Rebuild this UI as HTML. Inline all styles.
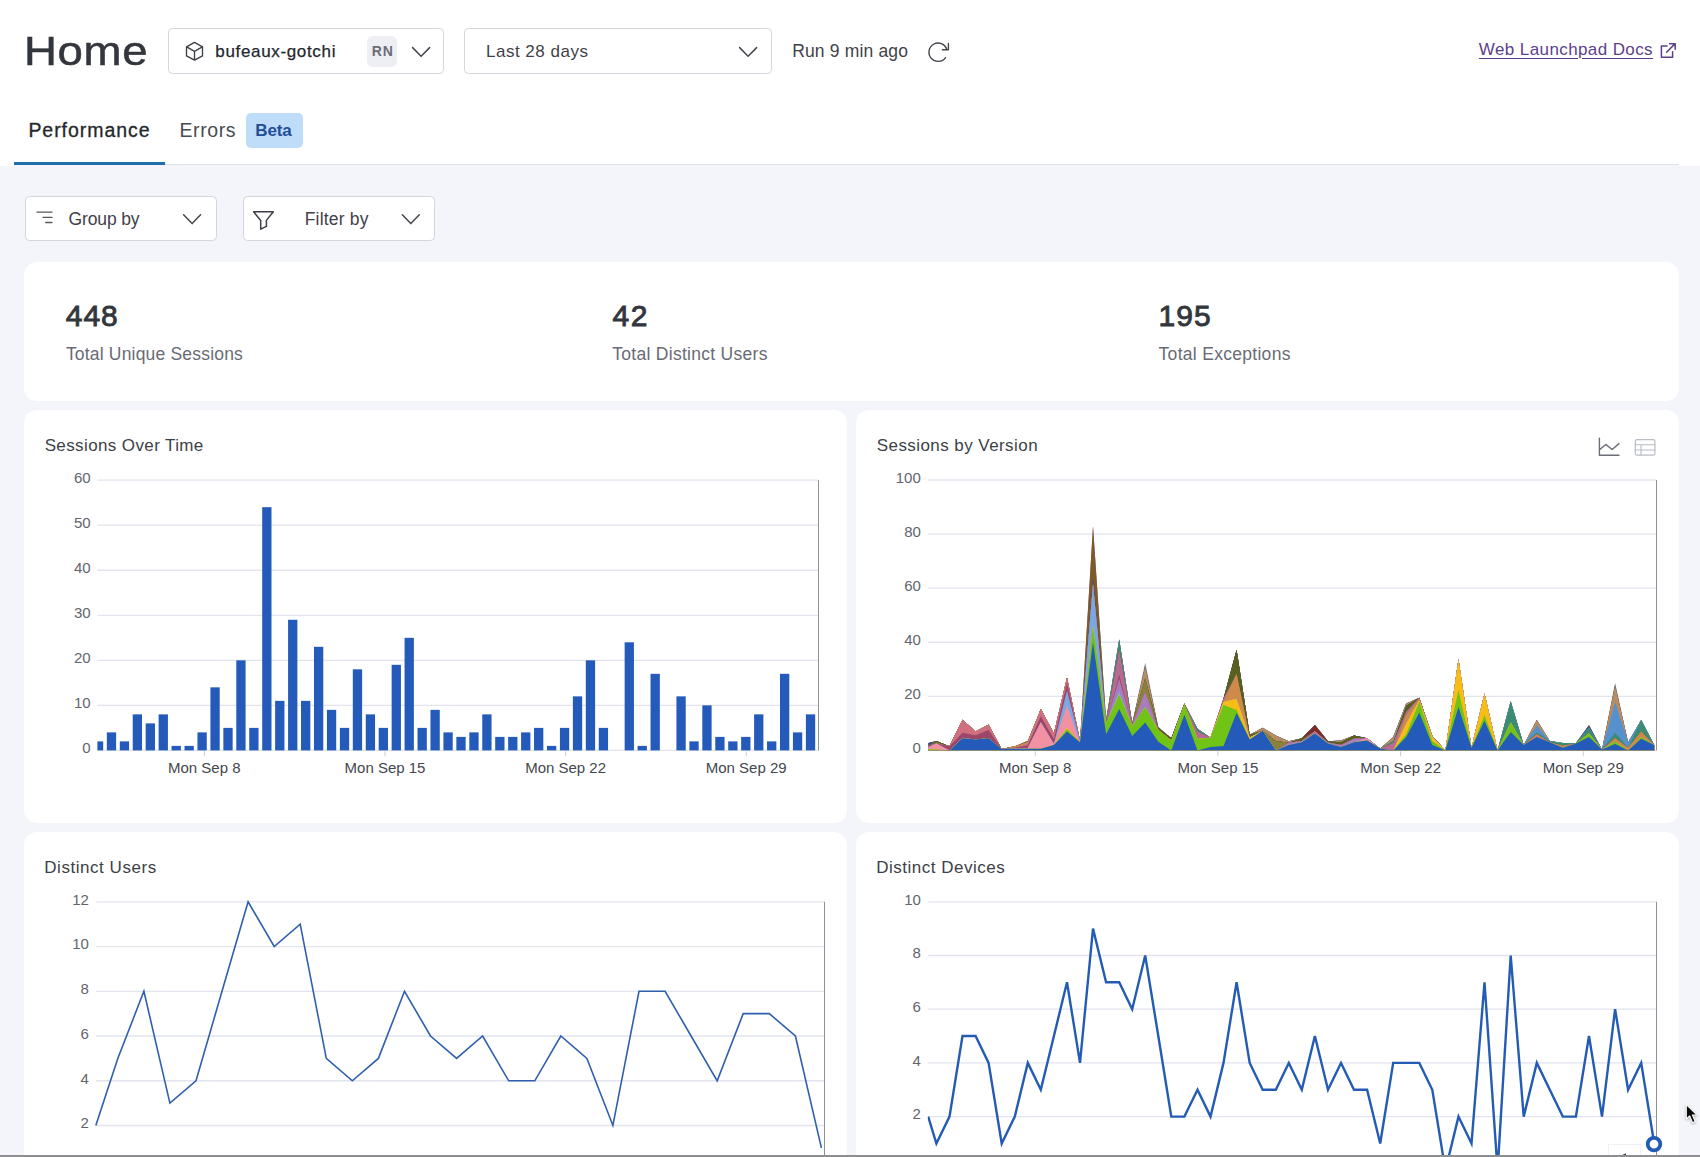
<!DOCTYPE html>
<html lang="en"><head><meta charset="utf-8"><title>Home</title>
<style>
html,body{margin:0;padding:0;}
body{width:1700px;height:1157px;overflow:hidden;position:relative;background:#f4f5fa;font-family:"Liberation Sans", sans-serif;}
.t{position:absolute;white-space:nowrap;line-height:1;}
.abs{position:absolute;}
.hdr{left:0;top:0;width:1700px;height:164px;background:#fff;}
.card{background:#fff;border-radius:13px;}
.sel{background:#fff;border:1.5px solid #d5d6dd;border-radius:4.5px;box-sizing:border-box;}
svg{position:absolute;left:0;top:0;overflow:visible;}
</style></head><body>

<div id="nontext" style="display:contents">
<div class="abs hdr"></div>
<div class="abs" style="left:0;top:164px;width:14px;height:2px;background:#fff;"></div>
<div class="abs" style="left:1679px;top:164px;width:21px;height:2px;background:#fff;"></div>
<div class="abs" style="left:14px;top:163.5px;width:1665px;height:1.3px;background:#dfe1e8;"></div>
<div class="abs" style="left:14px;top:162.2px;width:151px;height:3px;background:#1f6fae;"></div>
<div class="abs sel" style="left:168.3px;top:28.3px;width:275.6px;height:45.7px;"></div>
<div class="abs sel" style="left:464.3px;top:28.3px;width:308px;height:45.7px;"></div>
<div class="abs" style="left:366.8px;top:36px;width:30.6px;height:30.5px;background:#eeeff4;border-radius:6px;"></div>
<div class="abs" style="left:246px;top:112.6px;width:57.2px;height:35.2px;background:#bfdcf8;border-radius:5px;"></div>
<div class="abs sel" style="left:24.6px;top:196.3px;width:192px;height:45px;"></div>
<div class="abs sel" style="left:242.6px;top:196.3px;width:192.6px;height:45px;"></div>
<div class="abs card" style="left:24px;top:262px;width:1655px;height:139px;"></div>
<div class="abs card" style="left:24px;top:410px;width:823px;height:413px;"></div>
<div class="abs card" style="left:856px;top:410px;width:823px;height:413px;"></div>
<div class="abs card" style="left:24px;top:832px;width:823px;height:412px;"></div>
<div class="abs card" style="left:856px;top:832px;width:823px;height:412px;"></div>
<svg width="1700" height="1157" viewBox="0 0 1700 1157">
<g fill="none" stroke-linecap="round" stroke-linejoin="round">
<!-- cube -->
<path d="M194.5 42.4 L202.5 46.8 L202.5 55.8 L194.5 60.1 L186.5 55.8 L186.5 46.8 Z M186.7 46.9 L194.5 51.3 L202.3 46.9 M194.5 51.3 L194.5 60" stroke="#3c3f46" stroke-width="1.35"/>
<!-- chevrons -->
<path d="M412.6 47.6 L421.1 56.2 L429.6 47.6" stroke="#44474e" stroke-width="1.5"/>
<path d="M739.6 47.6 L748.1 56.2 L756.6 47.6" stroke="#44474e" stroke-width="1.5"/>
<path d="M183.6 214.8 L192.1 223.6 L200.6 214.8" stroke="#44474e" stroke-width="1.5"/>
<path d="M402.3 214.8 L410.8 223.6 L419.3 214.8" stroke="#44474e" stroke-width="1.5"/>
<!-- refresh -->
<path d="M945.6 57.6 A9.2 9.2 0 1 1 946.9 49.4" stroke="#44474e" stroke-width="1.4"/>
<path d="M948.4 43.4 L948.4 49.7 L942.4 49.7" stroke="#44474e" stroke-width="1.4"/>
<!-- external link -->
<path d="M1667 46.1 L1661.4 46.1 L1661.4 57.3 L1672.6 57.3 L1672.6 51.8" stroke="#5b3f8c" stroke-width="1.5"/>
<path d="M1666.6 52.2 L1674.9 43.9 M1669.6 43.7 L1675.2 43.7 L1675.2 49.3" stroke="#5b3f8c" stroke-width="1.5"/>
<!-- group by -->
<path d="M37 212.2 L52 212.2 M43.1 217.4 L52 217.4 M45.7 222.5 L52 222.5" stroke="#55585f" stroke-width="1.3"/>
<!-- funnel -->
<path d="M253.6 211.8 L273.3 211.8 L266.4 220.4 L266.4 226.3 L260.7 229.2 L260.7 220.4 Z" stroke="#3c3f46" stroke-width="1.5"/>
<!-- line chart icon -->
<path d="M1599.4 438.2 L1599.4 455.2 L1619 455.2 M1599.6 449.8 L1605.7 444.4 L1612.2 449.5 L1618.9 443.6" stroke="#6c6f77" stroke-width="1.4"/>
<!-- table icon -->
<rect x="1635.3" y="439.7" width="19.6" height="15.4" rx="1.8" stroke="#b9bcc5" stroke-width="1.2"/>
<path d="M1635.3 444.7 L1654.9 444.7 M1635.3 450 L1654.9 450 M1641 444.7 L1641 455.1" stroke="#b9bcc5" stroke-width="1.1"/>
</g>
<!-- mouse cursor -->
<path d="M1686.3 1104.6 L1686.3 1119 L1689.7 1115.9 L1692.6 1122.7 L1695.2 1121.5 L1692.4 1115 L1696.9 1114.8 Z" fill="#0a0a0a" stroke="#fff" stroke-width="1.1" stroke-linejoin="round" style="filter:drop-shadow(0.5px 1px 1px rgba(0,0,0,0.3))"/>

<line x1="97.4" y1="750.40" x2="818.4" y2="750.40" stroke="#e2e4ee" stroke-width="1.3"/>
<line x1="97.4" y1="705.36" x2="818.4" y2="705.36" stroke="#e2e4ee" stroke-width="1.3"/>
<line x1="97.4" y1="660.32" x2="818.4" y2="660.32" stroke="#e2e4ee" stroke-width="1.3"/>
<line x1="97.4" y1="615.28" x2="818.4" y2="615.28" stroke="#e2e4ee" stroke-width="1.3"/>
<line x1="97.4" y1="570.24" x2="818.4" y2="570.24" stroke="#e2e4ee" stroke-width="1.3"/>
<line x1="97.4" y1="525.20" x2="818.4" y2="525.20" stroke="#e2e4ee" stroke-width="1.3"/>
<line x1="97.4" y1="480.16" x2="818.4" y2="480.16" stroke="#e2e4ee" stroke-width="1.3"/>
<clipPath id="cp1"><rect x="97.4" y="470" width="721.0" height="290"/></clipPath>
<g clip-path="url(#cp1)" fill="#245bba"><rect x="93.90" y="741.39" width="9.3" height="9.01"/><rect x="106.84" y="732.38" width="9.3" height="18.02"/><rect x="119.79" y="741.39" width="9.3" height="9.01"/><rect x="132.73" y="714.37" width="9.3" height="36.03"/><rect x="145.68" y="723.38" width="9.3" height="27.02"/><rect x="158.62" y="714.37" width="9.3" height="36.03"/><rect x="171.57" y="745.90" width="9.3" height="4.50"/><rect x="184.52" y="745.90" width="9.3" height="4.50"/><rect x="197.46" y="732.38" width="9.3" height="18.02"/><rect x="210.41" y="687.34" width="9.3" height="63.06"/><rect x="223.35" y="727.88" width="9.3" height="22.52"/><rect x="236.29" y="660.32" width="9.3" height="90.08"/><rect x="249.24" y="727.88" width="9.3" height="22.52"/><rect x="262.19" y="507.18" width="9.3" height="243.22"/><rect x="275.13" y="700.86" width="9.3" height="49.54"/><rect x="288.08" y="619.78" width="9.3" height="130.62"/><rect x="301.02" y="700.86" width="9.3" height="49.54"/><rect x="313.97" y="646.81" width="9.3" height="103.59"/><rect x="326.91" y="709.86" width="9.3" height="40.54"/><rect x="339.86" y="727.88" width="9.3" height="22.52"/><rect x="352.80" y="669.33" width="9.3" height="81.07"/><rect x="365.75" y="714.37" width="9.3" height="36.03"/><rect x="378.69" y="727.88" width="9.3" height="22.52"/><rect x="391.64" y="664.82" width="9.3" height="85.58"/><rect x="404.58" y="637.80" width="9.3" height="112.60"/><rect x="417.53" y="727.88" width="9.3" height="22.52"/><rect x="430.47" y="709.86" width="9.3" height="40.54"/><rect x="443.42" y="732.38" width="9.3" height="18.02"/><rect x="456.36" y="736.89" width="9.3" height="13.51"/><rect x="469.31" y="732.38" width="9.3" height="18.02"/><rect x="482.25" y="714.37" width="9.3" height="36.03"/><rect x="495.20" y="736.89" width="9.3" height="13.51"/><rect x="508.14" y="736.89" width="9.3" height="13.51"/><rect x="521.09" y="732.38" width="9.3" height="18.02"/><rect x="534.03" y="727.88" width="9.3" height="22.52"/><rect x="546.98" y="745.90" width="9.3" height="4.50"/><rect x="559.92" y="727.88" width="9.3" height="22.52"/><rect x="572.87" y="696.35" width="9.3" height="54.05"/><rect x="585.81" y="660.32" width="9.3" height="90.08"/><rect x="598.75" y="727.88" width="9.3" height="22.52"/><rect x="624.64" y="642.30" width="9.3" height="108.10"/><rect x="637.59" y="745.90" width="9.3" height="4.50"/><rect x="650.53" y="673.83" width="9.3" height="76.57"/><rect x="676.42" y="696.35" width="9.3" height="54.05"/><rect x="689.37" y="741.39" width="9.3" height="9.01"/><rect x="702.31" y="705.36" width="9.3" height="45.04"/><rect x="715.26" y="736.89" width="9.3" height="13.51"/><rect x="728.21" y="741.39" width="9.3" height="9.01"/><rect x="741.15" y="736.89" width="9.3" height="13.51"/><rect x="754.10" y="714.37" width="9.3" height="36.03"/><rect x="767.04" y="741.39" width="9.3" height="9.01"/><rect x="779.99" y="673.83" width="9.3" height="76.57"/><rect x="792.93" y="732.38" width="9.3" height="18.02"/><rect x="805.88" y="714.37" width="9.3" height="36.03"/><rect x="818.82" y="741.39" width="9.3" height="9.01"/></g>
<line x1="818.5" y1="480.16" x2="818.5" y2="750.40" stroke="#8f9199" stroke-width="1"/>
<line x1="204.30" y1="751.3" x2="204.30" y2="756.3" stroke="#c9ccd6" stroke-width="1"/>
<line x1="385.00" y1="751.3" x2="385.00" y2="756.3" stroke="#c9ccd6" stroke-width="1"/>
<line x1="565.60" y1="751.3" x2="565.60" y2="756.3" stroke="#c9ccd6" stroke-width="1"/>
<line x1="746.20" y1="751.3" x2="746.20" y2="756.3" stroke="#c9ccd6" stroke-width="1"/>
<line x1="928.2" y1="750.40" x2="1656.3" y2="750.40" stroke="#e2e4ee" stroke-width="1.3"/>
<line x1="928.2" y1="696.32" x2="1656.3" y2="696.32" stroke="#e2e4ee" stroke-width="1.3"/>
<line x1="928.2" y1="642.24" x2="1656.3" y2="642.24" stroke="#e2e4ee" stroke-width="1.3"/>
<line x1="928.2" y1="588.16" x2="1656.3" y2="588.16" stroke="#e2e4ee" stroke-width="1.3"/>
<line x1="928.2" y1="534.08" x2="1656.3" y2="534.08" stroke="#e2e4ee" stroke-width="1.3"/>
<line x1="928.2" y1="480.00" x2="1656.3" y2="480.00" stroke="#e2e4ee" stroke-width="1.3"/>
<clipPath id="cp2"><rect x="928.2" y="470" width="727.5999999999999" height="280.29999999999995"/></clipPath>
<g clip-path="url(#cp2)"><polygon fill="#7d7f93" points="928.2,743.1 936.4,740.9 949.5,746.3 962.5,719.8 975.6,731.5 988.6,724.7 1001.7,749.0 1014.8,746.3 1027.8,740.7 1040.8,709.0 1053.9,733.6 1067.0,677.4 1080.0,740.7 1093.0,526.0 1106.1,719.3 1119.2,639.5 1132.2,723.4 1145.2,662.8 1158.3,726.9 1171.3,738.2 1184.4,703.4 1197.5,728.8 1210.5,737.7 1223.5,698.8 1236.6,649.8 1249.7,734.7 1262.7,727.7 1275.8,735.5 1288.8,741.2 1301.8,738.2 1314.9,725.0 1328.0,741.2 1341.0,740.4 1354.0,735.5 1367.1,738.2 1380.2,748.5 1393.2,736.9 1406.2,703.6 1419.3,697.7 1432.3,736.1 1445.4,750.4 1458.5,659.3 1471.5,747.7 1484.5,693.6 1497.6,750.4 1510.7,701.2 1523.7,745.0 1536.8,720.1 1549.8,740.9 1562.8,743.1 1575.9,743.1 1589.0,725.3 1602.0,749.6 1615.1,682.8 1628.1,742.3 1641.2,720.1 1654.2,745.0 1654.2,751.4 928.2,751.4"/><polygon fill="#80592a" points="928.2,743.1 936.4,740.9 949.5,746.3 962.5,719.8 975.6,731.5 988.6,724.7 1001.7,749.0 1014.8,746.3 1027.8,740.7 1040.8,709.0 1053.9,733.6 1067.0,677.4 1080.0,740.7 1093.0,526.0 1106.1,719.3 1119.2,639.5 1132.2,723.4 1145.2,666.6 1158.3,726.9 1171.3,738.2 1184.4,703.4 1197.5,728.8 1210.5,737.7 1223.5,698.8 1236.6,649.8 1249.7,734.7 1262.7,727.7 1275.8,735.5 1288.8,741.2 1301.8,738.2 1314.9,725.0 1328.0,741.2 1341.0,740.4 1354.0,735.5 1367.1,738.2 1380.2,748.5 1393.2,736.9 1406.2,703.6 1419.3,697.7 1432.3,736.1 1445.4,750.4 1458.5,659.3 1471.5,747.7 1484.5,693.6 1497.6,750.4 1510.7,701.2 1523.7,745.0 1536.8,720.1 1549.8,740.9 1562.8,743.1 1575.9,743.1 1589.0,725.3 1602.0,749.6 1615.1,685.5 1628.1,742.3 1641.2,720.1 1654.2,745.0 1654.2,751.4 928.2,751.4"/><polygon fill="#3a4a8c" points="928.2,743.1 936.4,740.9 949.5,746.3 962.5,719.8 975.6,731.5 988.6,724.7 1001.7,749.0 1014.8,746.3 1027.8,742.0 1040.8,709.0 1053.9,733.6 1067.0,677.4 1080.0,740.7 1093.0,577.3 1106.1,721.2 1119.2,639.5 1132.2,723.4 1145.2,666.6 1158.3,728.0 1171.3,738.2 1184.4,703.4 1197.5,728.8 1210.5,737.7 1223.5,698.8 1236.6,649.8 1249.7,734.7 1262.7,727.7 1275.8,735.5 1288.8,741.2 1301.8,738.2 1314.9,725.0 1328.0,741.2 1341.0,740.4 1354.0,735.5 1367.1,738.2 1380.2,748.5 1393.2,736.9 1406.2,703.6 1419.3,697.7 1432.3,736.1 1445.4,750.4 1458.5,659.3 1471.5,747.7 1484.5,693.6 1497.6,750.4 1510.7,701.2 1523.7,745.0 1536.8,720.1 1549.8,740.9 1562.8,743.1 1575.9,743.1 1589.0,725.3 1602.0,749.6 1615.1,685.5 1628.1,742.3 1641.2,720.1 1654.2,745.0 1654.2,751.4 928.2,751.4"/><polygon fill="#b98d62" points="928.2,745.8 936.4,740.9 949.5,746.3 962.5,719.8 975.6,731.5 988.6,724.7 1001.7,749.0 1014.8,746.3 1027.8,742.0 1040.8,709.0 1053.9,733.6 1067.0,677.4 1080.0,740.7 1093.0,584.1 1106.1,721.2 1119.2,639.5 1132.2,723.4 1145.2,666.6 1158.3,728.0 1171.3,738.2 1184.4,703.4 1197.5,728.8 1210.5,737.7 1223.5,698.8 1236.6,649.8 1249.7,734.7 1262.7,727.7 1275.8,735.5 1288.8,741.2 1301.8,738.2 1314.9,725.0 1328.0,741.2 1341.0,740.4 1354.0,735.5 1367.1,738.2 1380.2,748.5 1393.2,736.9 1406.2,703.6 1419.3,697.7 1432.3,736.1 1445.4,750.4 1458.5,659.3 1471.5,747.7 1484.5,693.6 1497.6,750.4 1510.7,701.2 1523.7,745.0 1536.8,720.1 1549.8,740.9 1562.8,743.1 1575.9,743.1 1589.0,727.4 1602.0,749.6 1615.1,685.5 1628.1,742.3 1641.2,720.1 1654.2,745.0 1654.2,751.4 928.2,751.4"/><polygon fill="#5690cd" points="928.2,745.8 936.4,740.9 949.5,746.3 962.5,719.8 975.6,731.5 988.6,724.7 1001.7,749.0 1014.8,746.3 1027.8,742.0 1040.8,709.0 1053.9,733.6 1067.0,677.4 1080.0,740.7 1093.0,584.1 1106.1,721.2 1119.2,639.5 1132.2,723.4 1145.2,678.5 1158.3,728.0 1171.3,738.2 1184.4,703.4 1197.5,728.8 1210.5,737.7 1223.5,698.8 1236.6,649.8 1249.7,734.7 1262.7,730.7 1275.8,740.9 1288.8,742.8 1301.8,738.2 1314.9,725.0 1328.0,741.2 1341.0,742.3 1354.0,735.5 1367.1,738.2 1380.2,748.5 1393.2,740.9 1406.2,705.8 1419.3,697.7 1432.3,736.1 1445.4,750.4 1458.5,659.3 1471.5,747.7 1484.5,693.6 1497.6,750.4 1510.7,701.2 1523.7,745.0 1536.8,725.5 1549.8,740.9 1562.8,743.1 1575.9,743.1 1589.0,727.4 1602.0,749.6 1615.1,702.0 1628.1,742.3 1641.2,720.1 1654.2,745.0 1654.2,751.4 928.2,751.4"/><polygon fill="#3b8c74" points="928.2,745.8 936.4,740.9 949.5,746.3 962.5,719.8 975.6,731.5 988.6,724.7 1001.7,749.0 1014.8,746.3 1027.8,742.0 1040.8,709.0 1053.9,733.6 1067.0,677.4 1080.0,740.7 1093.0,584.1 1106.1,721.2 1119.2,639.5 1132.2,723.4 1145.2,678.5 1158.3,728.0 1171.3,738.2 1184.4,703.4 1197.5,728.8 1210.5,737.7 1223.5,698.8 1236.6,649.8 1249.7,734.7 1262.7,730.7 1275.8,740.9 1288.8,742.8 1301.8,738.2 1314.9,725.0 1328.0,741.2 1341.0,742.3 1354.0,735.5 1367.1,738.2 1380.2,748.5 1393.2,740.9 1406.2,705.8 1419.3,697.7 1432.3,736.1 1445.4,750.4 1458.5,659.3 1471.5,747.7 1484.5,693.6 1497.6,750.4 1510.7,701.2 1523.7,745.0 1536.8,732.3 1549.8,740.9 1562.8,743.1 1575.9,743.1 1589.0,727.4 1602.0,749.6 1615.1,732.8 1628.1,747.7 1641.2,720.1 1654.2,745.0 1654.2,751.4 928.2,751.4"/><polygon fill="#7c2a2c" points="928.2,745.8 936.4,740.9 949.5,746.3 962.5,719.8 975.6,731.5 988.6,724.7 1001.7,749.0 1014.8,746.3 1027.8,742.0 1040.8,709.0 1053.9,733.6 1067.0,677.4 1080.0,740.7 1093.0,584.1 1106.1,723.4 1119.2,649.8 1132.2,723.4 1145.2,678.5 1158.3,728.0 1171.3,738.2 1184.4,703.4 1197.5,731.5 1210.5,737.7 1223.5,698.8 1236.6,649.8 1249.7,734.7 1262.7,730.7 1275.8,740.9 1288.8,742.8 1301.8,738.2 1314.9,725.0 1328.0,741.2 1341.0,742.3 1354.0,735.5 1367.1,738.2 1380.2,748.5 1393.2,743.1 1406.2,705.8 1419.3,697.7 1432.3,736.1 1445.4,750.4 1458.5,659.3 1471.5,747.7 1484.5,693.6 1497.6,750.4 1510.7,722.5 1523.7,745.0 1536.8,734.2 1549.8,742.3 1562.8,745.8 1575.9,743.6 1589.0,733.4 1602.0,749.6 1615.1,738.2 1628.1,747.7 1641.2,731.5 1654.2,745.0 1654.2,751.4 928.2,751.4"/><polygon fill="#57601f" points="928.2,745.8 936.4,740.9 949.5,746.3 962.5,719.8 975.6,731.5 988.6,724.7 1001.7,749.0 1014.8,746.3 1027.8,742.0 1040.8,709.0 1053.9,733.6 1067.0,677.4 1080.0,740.7 1093.0,584.1 1106.1,723.4 1119.2,649.8 1132.2,723.4 1145.2,678.5 1158.3,728.0 1171.3,738.2 1184.4,703.4 1197.5,731.5 1210.5,737.7 1223.5,698.8 1236.6,649.8 1249.7,734.7 1262.7,730.7 1275.8,740.9 1288.8,742.8 1301.8,738.2 1314.9,731.2 1328.0,741.2 1341.0,742.3 1354.0,735.5 1367.1,738.2 1380.2,748.5 1393.2,743.1 1406.2,705.8 1419.3,697.7 1432.3,736.1 1445.4,750.4 1458.5,659.3 1471.5,747.7 1484.5,693.6 1497.6,750.4 1510.7,722.5 1523.7,745.0 1536.8,734.2 1549.8,742.3 1562.8,745.8 1575.9,743.6 1589.0,733.4 1602.0,749.6 1615.1,738.2 1628.1,747.7 1641.2,731.5 1654.2,745.0 1654.2,751.4 928.2,751.4"/><polygon fill="#8a8238" points="928.2,745.8 936.4,742.3 949.5,746.3 962.5,719.8 975.6,731.5 988.6,724.7 1001.7,749.0 1014.8,746.3 1027.8,742.0 1040.8,709.0 1053.9,733.6 1067.0,677.4 1080.0,740.7 1093.0,584.1 1106.1,723.4 1119.2,649.8 1132.2,723.4 1145.2,678.5 1158.3,730.1 1171.3,740.4 1184.4,703.4 1197.5,731.5 1210.5,737.7 1223.5,698.8 1236.6,673.9 1249.7,737.4 1262.7,730.7 1275.8,740.9 1288.8,742.8 1301.8,740.9 1314.9,731.2 1328.0,742.6 1341.0,745.0 1354.0,738.8 1367.1,738.2 1380.2,748.5 1393.2,743.1 1406.2,712.0 1419.3,697.7 1432.3,736.1 1445.4,750.4 1458.5,659.3 1471.5,747.7 1484.5,693.6 1497.6,750.4 1510.7,722.5 1523.7,745.0 1536.8,734.2 1549.8,742.3 1562.8,745.8 1575.9,743.6 1589.0,733.4 1602.0,749.6 1615.1,738.2 1628.1,747.7 1641.2,731.5 1654.2,745.0 1654.2,751.4 928.2,751.4"/><polygon fill="#b86a96" points="928.2,745.8 936.4,743.4 949.5,746.3 962.5,719.8 975.6,731.5 988.6,724.7 1001.7,749.0 1014.8,746.3 1027.8,742.0 1040.8,709.0 1053.9,733.6 1067.0,677.4 1080.0,740.7 1093.0,584.1 1106.1,723.4 1119.2,649.8 1132.2,724.7 1145.2,692.0 1158.3,730.1 1171.3,740.4 1184.4,704.4 1197.5,731.5 1210.5,737.7 1223.5,698.8 1236.6,673.9 1249.7,737.4 1262.7,730.7 1275.8,750.4 1288.8,742.8 1301.8,740.9 1314.9,731.2 1328.0,742.6 1341.0,745.0 1354.0,738.8 1367.1,738.2 1380.2,748.5 1393.2,743.1 1406.2,712.0 1419.3,697.7 1432.3,736.1 1445.4,750.4 1458.5,659.3 1471.5,747.7 1484.5,693.6 1497.6,750.4 1510.7,722.5 1523.7,745.0 1536.8,734.2 1549.8,742.3 1562.8,745.8 1575.9,743.6 1589.0,733.4 1602.0,749.6 1615.1,738.2 1628.1,747.7 1641.2,731.5 1654.2,745.0 1654.2,751.4 928.2,751.4"/><polygon fill="#cd8a48" points="928.2,745.8 936.4,743.4 949.5,746.3 962.5,719.8 975.6,731.5 988.6,724.7 1001.7,749.0 1014.8,746.3 1027.8,742.0 1040.8,709.0 1053.9,733.6 1067.0,677.4 1080.0,740.7 1093.0,584.1 1106.1,723.4 1119.2,674.7 1132.2,724.7 1145.2,692.0 1158.3,730.1 1171.3,740.4 1184.4,704.4 1197.5,738.8 1210.5,737.7 1223.5,701.7 1236.6,673.9 1249.7,737.4 1262.7,730.7 1275.8,750.4 1288.8,742.8 1301.8,740.9 1314.9,731.2 1328.0,742.6 1341.0,745.0 1354.0,738.8 1367.1,738.2 1380.2,748.5 1393.2,750.4 1406.2,715.2 1419.3,698.8 1432.3,736.1 1445.4,750.4 1458.5,659.3 1471.5,747.7 1484.5,693.6 1497.6,750.4 1510.7,722.5 1523.7,745.0 1536.8,734.2 1549.8,742.3 1562.8,745.8 1575.9,743.6 1589.0,733.4 1602.0,749.6 1615.1,738.2 1628.1,747.7 1641.2,731.5 1654.2,745.0 1654.2,751.4 928.2,751.4"/><polygon fill="#cf6f80" points="928.2,745.8 936.4,743.4 949.5,746.3 962.5,719.8 975.6,731.5 988.6,724.7 1001.7,749.0 1014.8,747.7 1027.8,743.6 1040.8,709.0 1053.9,733.6 1067.0,677.4 1080.0,740.7 1093.0,584.1 1106.1,723.4 1119.2,674.7 1132.2,724.7 1145.2,692.0 1158.3,730.1 1171.3,740.4 1184.4,704.4 1197.5,738.8 1210.5,737.7 1223.5,701.7 1236.6,698.8 1249.7,737.4 1262.7,730.7 1275.8,750.4 1288.8,742.8 1301.8,740.9 1314.9,731.2 1328.0,742.6 1341.0,745.0 1354.0,738.8 1367.1,738.2 1380.2,748.5 1393.2,750.4 1406.2,723.4 1419.3,700.1 1432.3,736.9 1445.4,750.4 1458.5,659.3 1471.5,747.7 1484.5,693.6 1497.6,750.4 1510.7,722.5 1523.7,745.0 1536.8,735.5 1549.8,742.3 1562.8,747.7 1575.9,743.6 1589.0,733.4 1602.0,749.6 1615.1,741.5 1628.1,750.4 1641.2,736.9 1654.2,745.0 1654.2,751.4 928.2,751.4"/><polygon fill="#9c476a" points="928.2,745.8 936.4,743.4 949.5,746.3 962.5,732.8 975.6,735.3 988.6,730.1 1001.7,749.0 1014.8,747.7 1027.8,745.3 1040.8,716.3 1053.9,739.0 1067.0,682.8 1080.0,741.5 1093.0,584.1 1106.1,723.4 1119.2,674.7 1132.2,724.7 1145.2,692.0 1158.3,730.1 1171.3,740.4 1184.4,704.4 1197.5,738.8 1210.5,737.7 1223.5,701.7 1236.6,698.8 1249.7,737.4 1262.7,730.7 1275.8,750.4 1288.8,742.8 1301.8,740.9 1314.9,732.3 1328.0,742.6 1341.0,745.0 1354.0,738.8 1367.1,738.2 1380.2,748.5 1393.2,750.4 1406.2,723.4 1419.3,700.1 1432.3,736.9 1445.4,750.4 1458.5,659.3 1471.5,747.7 1484.5,693.6 1497.6,750.4 1510.7,722.5 1523.7,745.0 1536.8,736.9 1549.8,742.3 1562.8,747.7 1575.9,743.6 1589.0,733.4 1602.0,749.6 1615.1,741.5 1628.1,750.4 1641.2,736.9 1654.2,745.0 1654.2,751.4 928.2,751.4"/><polygon fill="#a87cbf" points="928.2,747.2 936.4,743.4 949.5,750.4 962.5,737.4 975.6,739.6 988.6,738.2 1001.7,749.0 1014.8,748.8 1027.8,748.0 1040.8,722.3 1053.9,743.9 1067.0,690.9 1080.0,741.5 1093.0,584.1 1106.1,723.4 1119.2,678.7 1132.2,724.7 1145.2,692.0 1158.3,730.1 1171.3,740.4 1184.4,704.4 1197.5,738.8 1210.5,737.7 1223.5,701.7 1236.6,698.8 1249.7,737.4 1262.7,730.7 1275.8,750.4 1288.8,742.8 1301.8,740.9 1314.9,732.3 1328.0,742.6 1341.0,745.0 1354.0,738.8 1367.1,738.2 1380.2,748.5 1393.2,750.4 1406.2,723.4 1419.3,700.1 1432.3,736.9 1445.4,750.4 1458.5,659.3 1471.5,747.7 1484.5,693.6 1497.6,750.4 1510.7,722.5 1523.7,745.0 1536.8,736.9 1549.8,742.3 1562.8,747.7 1575.9,743.6 1589.0,733.4 1602.0,749.6 1615.1,741.5 1628.1,750.4 1641.2,736.9 1654.2,745.0 1654.2,751.4 928.2,751.4"/><polygon fill="#78a9e4" points="928.2,747.2 936.4,743.4 949.5,750.4 962.5,738.2 975.6,739.6 988.6,738.2 1001.7,749.0 1014.8,748.8 1027.8,748.0 1040.8,722.3 1053.9,743.9 1067.0,690.9 1080.0,741.5 1093.0,584.1 1106.1,723.4 1119.2,690.9 1132.2,726.1 1145.2,707.1 1158.3,730.1 1171.3,740.4 1184.4,704.4 1197.5,738.8 1210.5,737.7 1223.5,701.7 1236.6,698.8 1249.7,737.4 1262.7,730.7 1275.8,750.4 1288.8,745.0 1301.8,742.3 1314.9,733.4 1328.0,743.6 1341.0,746.9 1354.0,742.3 1367.1,738.2 1380.2,748.5 1393.2,750.4 1406.2,723.4 1419.3,700.1 1432.3,736.9 1445.4,750.4 1458.5,659.3 1471.5,747.7 1484.5,693.6 1497.6,750.4 1510.7,722.5 1523.7,745.0 1536.8,736.9 1549.8,742.3 1562.8,747.7 1575.9,743.6 1589.0,733.4 1602.0,749.6 1615.1,741.5 1628.1,750.4 1641.2,736.9 1654.2,745.0 1654.2,751.4 928.2,751.4"/><polygon fill="#f291a4" points="928.2,747.2 936.4,743.4 949.5,750.4 962.5,738.2 975.6,739.6 988.6,738.2 1001.7,749.0 1014.8,748.8 1027.8,748.0 1040.8,722.3 1053.9,743.9 1067.0,705.5 1080.0,742.3 1093.0,626.0 1106.1,723.4 1119.2,694.4 1132.2,726.1 1145.2,707.1 1158.3,730.1 1171.3,740.4 1184.4,704.4 1197.5,738.8 1210.5,737.7 1223.5,701.7 1236.6,698.8 1249.7,737.4 1262.7,730.7 1275.8,750.4 1288.8,745.0 1301.8,742.3 1314.9,733.4 1328.0,743.6 1341.0,746.9 1354.0,742.3 1367.1,738.2 1380.2,748.5 1393.2,750.4 1406.2,723.4 1419.3,700.1 1432.3,736.9 1445.4,750.4 1458.5,659.3 1471.5,747.7 1484.5,693.6 1497.6,750.4 1510.7,722.5 1523.7,745.0 1536.8,736.9 1549.8,742.3 1562.8,747.7 1575.9,743.6 1589.0,733.4 1602.0,749.6 1615.1,741.5 1628.1,750.4 1641.2,736.9 1654.2,745.0 1654.2,751.4 928.2,751.4"/><polygon fill="#f6bd16" points="928.2,749.3 936.4,749.6 949.5,750.4 962.5,738.2 975.6,739.6 988.6,738.2 1001.7,749.0 1014.8,748.8 1027.8,748.8 1040.8,748.8 1053.9,745.0 1067.0,727.7 1080.0,742.3 1093.0,626.0 1106.1,723.4 1119.2,694.4 1132.2,726.1 1145.2,707.1 1158.3,730.1 1171.3,740.4 1184.4,704.4 1197.5,738.8 1210.5,737.7 1223.5,701.7 1236.6,698.8 1249.7,737.4 1262.7,730.7 1275.8,750.4 1288.8,745.0 1301.8,742.3 1314.9,733.4 1328.0,743.6 1341.0,746.9 1354.0,742.3 1367.1,740.4 1380.2,748.5 1393.2,750.4 1406.2,723.4 1419.3,700.1 1432.3,736.9 1445.4,750.4 1458.5,659.3 1471.5,747.7 1484.5,693.6 1497.6,750.4 1510.7,722.5 1523.7,745.0 1536.8,736.9 1549.8,742.3 1562.8,747.7 1575.9,743.6 1589.0,733.4 1602.0,749.6 1615.1,741.5 1628.1,750.4 1641.2,736.9 1654.2,745.0 1654.2,751.4 928.2,751.4"/><polygon fill="#6fc415" points="928.2,749.3 936.4,749.6 949.5,750.4 962.5,738.2 975.6,739.6 988.6,738.2 1001.7,749.0 1014.8,748.8 1027.8,748.8 1040.8,748.8 1053.9,745.0 1067.0,729.0 1080.0,742.3 1093.0,626.0 1106.1,723.4 1119.2,694.4 1132.2,726.1 1145.2,707.1 1158.3,730.1 1171.3,740.4 1184.4,704.4 1197.5,738.8 1210.5,737.7 1223.5,705.0 1236.6,710.1 1249.7,739.6 1262.7,730.7 1275.8,750.4 1288.8,745.0 1301.8,742.3 1314.9,733.4 1328.0,743.6 1341.0,746.9 1354.0,742.3 1367.1,740.4 1380.2,748.5 1393.2,750.4 1406.2,734.2 1419.3,701.7 1432.3,740.9 1445.4,750.4 1458.5,690.1 1471.5,747.7 1484.5,715.2 1497.6,750.4 1510.7,722.5 1523.7,745.0 1536.8,736.9 1549.8,742.3 1562.8,747.7 1575.9,743.6 1589.0,733.4 1602.0,749.6 1615.1,741.5 1628.1,750.4 1641.2,736.9 1654.2,745.0 1654.2,751.4 928.2,751.4"/><polygon fill="#245bba" points="928.2,750.4 936.4,750.4 949.5,750.4 962.5,738.2 975.6,739.6 988.6,738.2 1001.7,749.0 1014.8,748.8 1027.8,748.8 1040.8,748.8 1053.9,745.0 1067.0,731.5 1080.0,742.3 1093.0,642.2 1106.1,734.2 1119.2,709.0 1132.2,736.1 1145.2,722.5 1158.3,741.7 1171.3,750.4 1184.4,714.7 1197.5,750.4 1210.5,746.9 1223.5,746.1 1236.6,712.8 1249.7,739.6 1262.7,730.7 1275.8,750.4 1288.8,745.0 1301.8,742.3 1314.9,733.4 1328.0,743.6 1341.0,746.9 1354.0,742.3 1367.1,740.4 1380.2,748.5 1393.2,750.4 1406.2,736.9 1419.3,712.5 1432.3,745.0 1445.4,750.4 1458.5,707.1 1471.5,747.7 1484.5,720.7 1497.6,750.4 1510.7,732.0 1523.7,745.0 1536.8,736.9 1549.8,742.3 1562.8,747.7 1575.9,743.6 1589.0,736.9 1602.0,749.6 1615.1,743.9 1628.1,750.4 1641.2,738.8 1654.2,745.0 1654.2,751.4 928.2,751.4"/></g>
<line x1="1656.5" y1="480.00" x2="1656.5" y2="750.40" stroke="#8f9199" stroke-width="1"/>
<line x1="1035.20" y1="751.3" x2="1035.20" y2="756.3" stroke="#c9ccd6" stroke-width="1"/>
<line x1="1217.90" y1="751.3" x2="1217.90" y2="756.3" stroke="#c9ccd6" stroke-width="1"/>
<line x1="1400.60" y1="751.3" x2="1400.60" y2="756.3" stroke="#c9ccd6" stroke-width="1"/>
<line x1="1583.30" y1="751.3" x2="1583.30" y2="756.3" stroke="#c9ccd6" stroke-width="1"/>
<line x1="96.2" y1="1125.50" x2="824.5" y2="1125.50" stroke="#e2e4ee" stroke-width="1.3"/>
<line x1="96.2" y1="1080.76" x2="824.5" y2="1080.76" stroke="#e2e4ee" stroke-width="1.3"/>
<line x1="96.2" y1="1036.02" x2="824.5" y2="1036.02" stroke="#e2e4ee" stroke-width="1.3"/>
<line x1="96.2" y1="991.28" x2="824.5" y2="991.28" stroke="#e2e4ee" stroke-width="1.3"/>
<line x1="96.2" y1="946.54" x2="824.5" y2="946.54" stroke="#e2e4ee" stroke-width="1.3"/>
<line x1="96.2" y1="901.80" x2="824.5" y2="901.80" stroke="#e2e4ee" stroke-width="1.3"/>
<polyline fill="none" stroke="#2f5fae" stroke-width="1.6" stroke-linejoin="miter" points="95.8,1125.5 117.8,1058.4 143.9,991.3 169.9,1103.1 196.0,1080.8 222.0,991.3 248.1,901.8 274.2,946.5 300.2,924.2 326.3,1058.4 352.3,1080.8 378.4,1058.4 404.5,991.3 430.5,1036.0 456.6,1058.4 482.6,1036.0 508.7,1080.8 534.8,1080.8 560.8,1036.0 586.9,1058.4 612.9,1125.5 639.0,991.3 665.1,991.3 691.1,1036.0 717.2,1080.8 743.2,1013.6 769.3,1013.6 795.4,1036.0 821.4,1147.9"/>
<line x1="824.5" y1="901.80" x2="824.5" y2="1160.00" stroke="#8f9199" stroke-width="1"/>
<line x1="928.2" y1="1116.60" x2="1656.3" y2="1116.60" stroke="#e2e4ee" stroke-width="1.3"/>
<line x1="928.2" y1="1062.90" x2="1656.3" y2="1062.90" stroke="#e2e4ee" stroke-width="1.3"/>
<line x1="928.2" y1="1009.20" x2="1656.3" y2="1009.20" stroke="#e2e4ee" stroke-width="1.3"/>
<line x1="928.2" y1="955.50" x2="1656.3" y2="955.50" stroke="#e2e4ee" stroke-width="1.3"/>
<line x1="928.2" y1="901.80" x2="1656.3" y2="901.80" stroke="#e2e4ee" stroke-width="1.3"/>
<clipPath id="cp4"><rect x="927.7" y="890" width="740" height="280"/></clipPath>
<polyline clip-path="url(#cp4)" fill="none" stroke="#245bb4" stroke-width="2.4" stroke-linejoin="miter" points="928.2,1116.6 936.4,1143.5 949.5,1116.6 962.5,1036.0 975.6,1036.0 988.6,1062.9 1001.7,1143.5 1014.8,1116.6 1027.8,1062.9 1040.8,1089.8 1053.9,1036.0 1067.0,982.3 1080.0,1062.9 1093.0,928.6 1106.1,982.3 1119.2,982.3 1132.2,1009.2 1145.2,955.5 1158.3,1036.0 1171.3,1116.6 1184.4,1116.6 1197.5,1089.8 1210.5,1116.6 1223.5,1062.9 1236.6,982.3 1249.7,1062.9 1262.7,1089.8 1275.8,1089.8 1288.8,1062.9 1301.8,1089.8 1314.9,1036.0 1328.0,1089.8 1341.0,1062.9 1354.0,1089.8 1367.1,1089.8 1380.2,1143.5 1393.2,1062.9 1406.2,1062.9 1419.3,1062.9 1432.3,1089.8 1445.4,1170.3 1458.5,1116.6 1471.5,1143.5 1484.5,982.3 1497.6,1170.3 1510.7,955.5 1523.7,1116.6 1536.8,1062.9 1549.8,1089.8 1562.8,1116.6 1575.9,1116.6 1589.0,1036.0 1602.0,1116.6 1615.1,1009.2 1628.1,1089.8 1641.2,1062.9 1654.2,1143.5"/>
<line x1="1656.5" y1="901.80" x2="1656.5" y2="1160.00" stroke="#8f9199" stroke-width="1"/>
<rect x="1608.5" y="1144.5" width="32" height="14" fill="#fff" stroke="#f1f1f5" stroke-width="1"/><path d="M1621 1155.6 L1626 1153.2 L1626 1155.6 Z" fill="#444"/><circle cx="1654" cy="1144.1" r="6.3" fill="#fff" stroke="#245bb4" stroke-width="3.8"/>
</svg>
</div>
<span class="t" id="home" style="left:24.40px;top:31.09px;font-size:40px;font-weight:400;color:#33363d;letter-spacing:0.566px;-webkit-text-stroke:0.5px #33363d;transform:scaleX(1.14);transform-origin:0 0;">Home</span>
<span class="t" id="proj" style="left:215.31px;top:42.61px;font-size:17px;font-weight:400;color:#25272c;letter-spacing:0.661px;-webkit-text-stroke:0.25px #25272c;">bufeaux-gotchi</span>
<span class="t" id="rn" style="left:371.68px;top:44.15px;font-size:14px;font-weight:700;color:#6a6d76;letter-spacing:0.844px;">RN</span>
<span class="t" id="last" style="left:485.97px;top:42.61px;font-size:17px;font-weight:400;color:#3f4249;letter-spacing:0.508px;">Last 28 days</span>
<span class="t" id="run" style="left:792.14px;top:42.68px;font-size:17.5px;font-weight:400;color:#3f4249;letter-spacing:0.165px;">Run 9 min ago</span>
<span class="t" id="docs" style="left:1478.85px;top:41.01px;font-size:17px;font-weight:400;color:#5b3f8c;letter-spacing:0.401px;text-decoration:underline;text-decoration-thickness:1.3px;text-underline-offset:2.5px;">Web Launchpad Docs</span>
<span class="t" id="perf" style="left:28.41px;top:121.04px;font-size:19.5px;font-weight:400;color:#25272c;letter-spacing:0.956px;-webkit-text-stroke:0.3px #25272c;">Performance</span>
<span class="t" id="err" style="left:179.41px;top:121.29px;font-size:19.5px;font-weight:400;color:#484b52;letter-spacing:0.627px;">Errors</span>
<span class="t" id="beta" style="left:255.30px;top:121.61px;font-size:17px;font-weight:700;color:#1f4f9a;letter-spacing:-0.161px;">Beta</span>
<span class="t" id="grp" style="left:68.54px;top:210.79px;font-size:17.5px;font-weight:400;color:#3f4249;letter-spacing:-0.133px;">Group by</span>
<span class="t" id="flt" style="left:304.74px;top:210.83px;font-size:17.5px;font-weight:400;color:#3f4249;letter-spacing:0.197px;">Filter by</span>
<span class="t" id="num0" style="left:65.87px;top:301.41px;font-size:30px;font-weight:400;color:#33363d;letter-spacing:0.935px;-webkit-text-stroke:0.9px #33363d;">448</span>
<span class="t" id="lab0" style="left:65.88px;top:346.28px;font-size:17.5px;font-weight:400;color:#686b74;letter-spacing:0.190px;">Total Unique Sessions</span>
<span class="t" id="num1" style="left:612.48px;top:301.41px;font-size:30px;font-weight:400;color:#33363d;letter-spacing:1.640px;-webkit-text-stroke:0.9px #33363d;">42</span>
<span class="t" id="lab1" style="left:612.30px;top:346.35px;font-size:17.5px;font-weight:400;color:#686b74;letter-spacing:0.282px;">Total Distinct Users</span>
<span class="t" id="num2" style="left:1158.59px;top:301.41px;font-size:30px;font-weight:400;color:#33363d;letter-spacing:0.974px;-webkit-text-stroke:0.9px #33363d;">195</span>
<span class="t" id="lab2" style="left:1158.58px;top:346.29px;font-size:17.5px;font-weight:400;color:#686b74;letter-spacing:0.294px;">Total Exceptions</span>
<span class="t" id="t1" style="left:44.65px;top:437.11px;font-size:17px;font-weight:400;color:#3c3f46;letter-spacing:0.385px;">Sessions Over Time</span>
<span class="t" id="t2" style="left:876.73px;top:437.11px;font-size:17px;font-weight:400;color:#3c3f46;letter-spacing:0.433px;">Sessions by Version</span>
<span class="t" id="t3" style="left:44.28px;top:859.01px;font-size:17px;font-weight:400;color:#3c3f46;letter-spacing:0.541px;">Distinct Users</span>
<span class="t" id="t4" style="left:876.28px;top:859.01px;font-size:17px;font-weight:400;color:#3c3f46;letter-spacing:0.510px;">Distinct Devices</span>
<span class="t" id="c1y0" style="right:1609.40px;top:740.20px;font-size:15px;font-weight:400;color:#62656c;letter-spacing:0.000px;">0</span>
<span class="t" id="c1y10" style="right:1609.40px;top:695.16px;font-size:15px;font-weight:400;color:#62656c;letter-spacing:0.000px;">10</span>
<span class="t" id="c1y20" style="right:1609.40px;top:650.12px;font-size:15px;font-weight:400;color:#62656c;letter-spacing:0.000px;">20</span>
<span class="t" id="c1y30" style="right:1609.40px;top:605.08px;font-size:15px;font-weight:400;color:#62656c;letter-spacing:0.000px;">30</span>
<span class="t" id="c1y40" style="right:1609.40px;top:560.04px;font-size:15px;font-weight:400;color:#62656c;letter-spacing:0.000px;">40</span>
<span class="t" id="c1y50" style="right:1609.40px;top:515.00px;font-size:15px;font-weight:400;color:#62656c;letter-spacing:0.000px;">50</span>
<span class="t" id="c1y60" style="right:1609.40px;top:469.96px;font-size:15px;font-weight:400;color:#62656c;letter-spacing:0.000px;">60</span>
<span class="t" id="c1x0" style="left:54.30px;width:300px;text-align:center;top:760.00px;font-size:15px;font-weight:400;color:#44474e;letter-spacing:0.000px;">Mon Sep 8</span>
<span class="t" id="c1x1" style="left:235.00px;width:300px;text-align:center;top:760.00px;font-size:15px;font-weight:400;color:#44474e;letter-spacing:0.000px;">Mon Sep 15</span>
<span class="t" id="c1x2" style="left:415.60px;width:300px;text-align:center;top:760.00px;font-size:15px;font-weight:400;color:#44474e;letter-spacing:0.000px;">Mon Sep 22</span>
<span class="t" id="c1x3" style="left:596.20px;width:300px;text-align:center;top:760.00px;font-size:15px;font-weight:400;color:#44474e;letter-spacing:0.000px;">Mon Sep 29</span>
<span class="t" id="c2y0" style="right:779.20px;top:740.20px;font-size:15px;font-weight:400;color:#62656c;letter-spacing:0.000px;">0</span>
<span class="t" id="c2y20" style="right:779.20px;top:686.12px;font-size:15px;font-weight:400;color:#62656c;letter-spacing:0.000px;">20</span>
<span class="t" id="c2y40" style="right:779.20px;top:632.04px;font-size:15px;font-weight:400;color:#62656c;letter-spacing:0.000px;">40</span>
<span class="t" id="c2y60" style="right:779.20px;top:577.96px;font-size:15px;font-weight:400;color:#62656c;letter-spacing:0.000px;">60</span>
<span class="t" id="c2y80" style="right:779.20px;top:523.88px;font-size:15px;font-weight:400;color:#62656c;letter-spacing:0.000px;">80</span>
<span class="t" id="c2y100" style="right:779.20px;top:469.80px;font-size:15px;font-weight:400;color:#62656c;letter-spacing:0.000px;">100</span>
<span class="t" id="c2x0" style="left:885.20px;width:300px;text-align:center;top:760.00px;font-size:15px;font-weight:400;color:#44474e;letter-spacing:0.000px;">Mon Sep 8</span>
<span class="t" id="c2x1" style="left:1067.90px;width:300px;text-align:center;top:760.00px;font-size:15px;font-weight:400;color:#44474e;letter-spacing:0.000px;">Mon Sep 15</span>
<span class="t" id="c2x2" style="left:1250.60px;width:300px;text-align:center;top:760.00px;font-size:15px;font-weight:400;color:#44474e;letter-spacing:0.000px;">Mon Sep 22</span>
<span class="t" id="c2x3" style="left:1433.30px;width:300px;text-align:center;top:760.00px;font-size:15px;font-weight:400;color:#44474e;letter-spacing:0.000px;">Mon Sep 29</span>
<span class="t" id="c3y2" style="right:1611.10px;top:1115.30px;font-size:15px;font-weight:400;color:#62656c;letter-spacing:0.000px;">2</span>
<span class="t" id="c3y4" style="right:1611.10px;top:1070.56px;font-size:15px;font-weight:400;color:#62656c;letter-spacing:0.000px;">4</span>
<span class="t" id="c3y6" style="right:1611.10px;top:1025.82px;font-size:15px;font-weight:400;color:#62656c;letter-spacing:0.000px;">6</span>
<span class="t" id="c3y8" style="right:1611.10px;top:981.08px;font-size:15px;font-weight:400;color:#62656c;letter-spacing:0.000px;">8</span>
<span class="t" id="c3y10" style="right:1611.10px;top:936.34px;font-size:15px;font-weight:400;color:#62656c;letter-spacing:0.000px;">10</span>
<span class="t" id="c3y12" style="right:1611.10px;top:891.60px;font-size:15px;font-weight:400;color:#62656c;letter-spacing:0.000px;">12</span>
<span class="t" id="c4y2" style="right:779.20px;top:1106.40px;font-size:15px;font-weight:400;color:#62656c;letter-spacing:0.000px;">2</span>
<span class="t" id="c4y4" style="right:779.20px;top:1052.70px;font-size:15px;font-weight:400;color:#62656c;letter-spacing:0.000px;">4</span>
<span class="t" id="c4y6" style="right:779.20px;top:999.00px;font-size:15px;font-weight:400;color:#62656c;letter-spacing:0.000px;">6</span>
<span class="t" id="c4y8" style="right:779.20px;top:945.30px;font-size:15px;font-weight:400;color:#62656c;letter-spacing:0.000px;">8</span>
<span class="t" id="c4y10" style="right:779.20px;top:891.60px;font-size:15px;font-weight:400;color:#62656c;letter-spacing:0.000px;">10</span>
<div class="abs" style="left:0;top:1155.3px;width:1700px;height:1.7px;background:#8e8e90;"></div>
</body></html>
